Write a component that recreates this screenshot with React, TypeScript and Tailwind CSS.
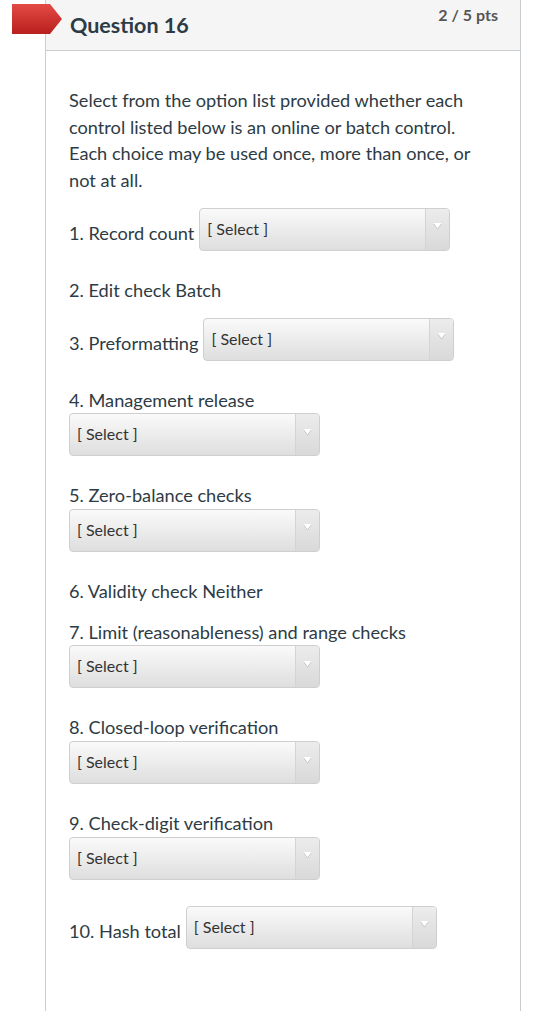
import React from "react";

function Select({ className = "" }: { className?: string }) {
  return (
    <div
      className={`relative flex h-[43px] w-[251px] shrink-0 items-center rounded-[4px] border border-[#cfcfcf] bg-gradient-to-b from-[#fafafa] to-[#dedede] ${className}`}
    >
      <span className="pb-[1px] pl-[7px] text-[16px] leading-none text-[#333]">[ Select ]</span>
      <div className="absolute right-0 top-0 flex h-full w-[24px] items-center justify-center rounded-r-[4px] border-l border-[#d4d4d4] bg-gradient-to-b from-[#ececec] to-[#d9d9d9]">
        <svg width="11" height="9" viewBox="0 0 11 9" className="mb-[5px]">
          <path d="M1.5 2 L9.5 2 L5.5 7.5 Z" fill="#bdbdbd" />
          <path d="M1.5 1 L9.5 1 L5.5 6.5 Z" fill="#ffffff" />
        </svg>
      </div>
    </div>
  );
}

function Label({ children }: { children: React.ReactNode }) {
  return <div className="leading-[26.7px]">{children}</div>;
}

export default function App() {
  return (
    <div
      className="relative min-h-[1011px] w-[560px] bg-white text-[#2d3b45]"
      style={{ fontFamily: "Lato, 'Open Sans', sans-serif" }}
    >
      <div className="ml-[45px] flex min-h-[1011px] w-[476px] flex-col border-x border-[#c7cdd1]">
        <div className="relative flex h-[51px] items-start justify-between border-b border-[#c7cdd1] bg-[#f5f5f5] pl-[24px] pr-[22px]">
          <div className="pt-[11px] text-[21.5px] font-bold leading-[28px] text-[#2d3b45]">Question 16</div>
          <div className="pt-[5px] text-[16px] font-bold leading-[20px] text-[#555]">2 / 5 pts</div>
        </div>
        <div className="flex flex-col pl-[23px] pr-[40px] pt-[36px] text-[18.2px]">
          <p className="leading-[26.7px]">
            Select from the option list provided whether each control listed below is an online or batch control. Each
            choice may be used once, more than once, or not at all.
          </p>

          <div className="mt-[14px] flex items-end">
            <div className="mb-[4px] mr-[5px] leading-[26.7px]">1. Record count</div>
            <Select />
          </div>

          <div className="mt-[26px]">
            <Label>2. Edit check Batch</Label>
          </div>

          <div className="mt-[14px] flex items-end">
            <div className="mb-[4px] mr-[5px] leading-[26.7px]">3. Preformatting</div>
            <Select />
          </div>

          <div className="mt-[26px]">
            <Label>4. Management release</Label>
            <Select />
          </div>

          <div className="mt-[26px]">
            <Label>5. Zero-balance checks</Label>
            <Select />
          </div>

          <div className="mt-[26px]">
            <Label>6. Validity check Neither</Label>
          </div>

          <div className="mt-[14px]">
            <Label>7. Limit (reasonableness) and range checks</Label>
            <Select />
          </div>

          <div className="mt-[26px]">
            <Label>8. Closed-loop verification</Label>
            <Select />
          </div>

          <div className="mt-[26px]">
            <Label>9. Check-digit verification</Label>
            <Select />
          </div>

          <div className="mt-[26px] flex items-end">
            <div className="mb-[4px] mr-[5px] leading-[26.7px]">10. Hash total</div>
            <Select />
          </div>
        </div>
      </div>

      <div className="absolute left-[12px] top-[4px] h-[30px] w-[50px]">
        <svg width="50" height="30" viewBox="0 0 50 30">
          <defs>
            <linearGradient id="flag" x1="0" y1="0" x2="0" y2="1">
              <stop offset="0" stopColor="#e44a45" />
              <stop offset="1" stopColor="#b8201d" />
            </linearGradient>
          </defs>
          <path d="M0 0 L38 0 L50 15 L38 30 L0 30 Z" fill="url(#flag)" />
        </svg>
      </div>
    </div>
  );
}
